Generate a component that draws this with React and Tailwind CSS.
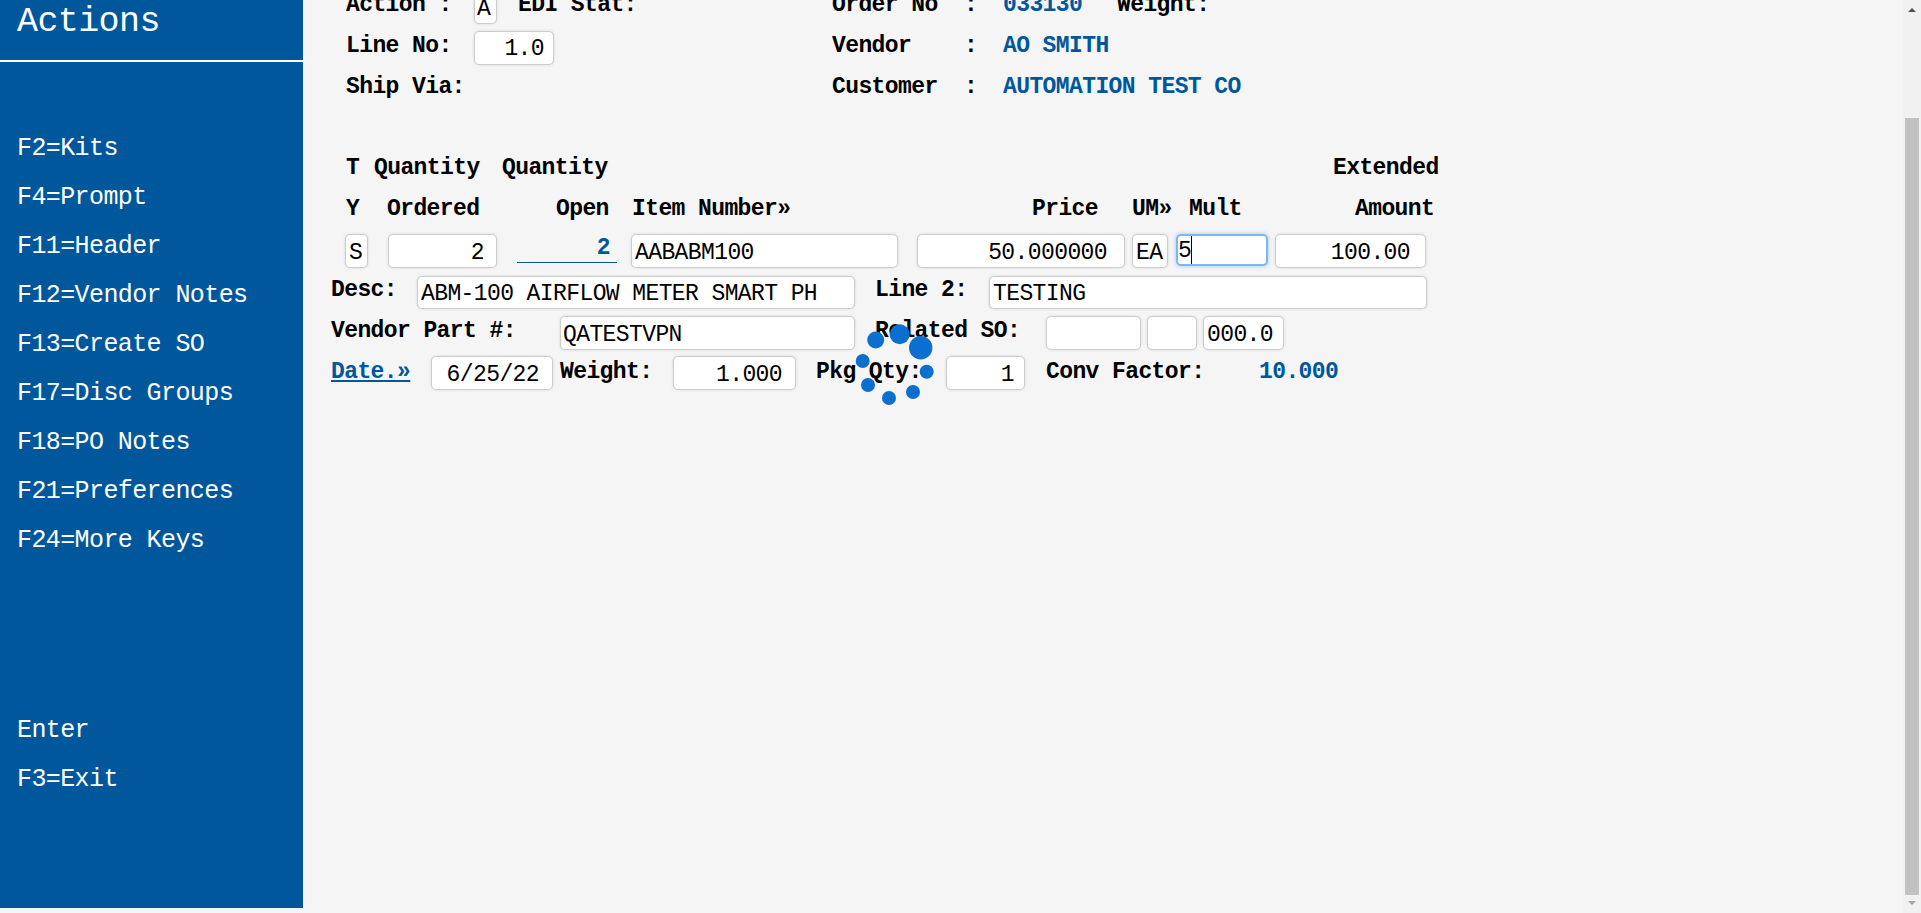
import React from "react";

const font = "font-['Liberation_Mono',monospace]";

const menuTop = [
  "F2=Kits",
  "F4=Prompt",
  "F11=Header",
  "F12=Vendor Notes",
  "F13=Create SO",
  "F17=Disc Groups",
  "F18=PO Notes",
  "F21=Preferences",
  "F24=More Keys",
];

// Bold field label
const Label = ({ className = "", children }) => (
  <div className={`font-bold text-black whitespace-pre leading-[33px] shrink-0 ${className}`}>
    {children}
  </div>
);

// Blue read-only value
const Value = ({ className = "", children }) => (
  <div className={`font-bold text-[#01579b] whitespace-pre leading-[33px] shrink-0 ${className}`}>
    {children}
  </div>
);

// Text box
const Field = ({ className = "", value = "" }) => (
  <input
    readOnly
    value={value}
    className={`h-[34px] pt-[4px] shrink-0 bg-white border border-[#cccccc] rounded-[5px] shadow-[0_0_3px_rgba(0,0,0,0.12)] text-black tracking-[-0.6px] outline-none ${font} text-[23px] ${className}`}
  />
);

const Sidebar = () => (
  <aside className="w-[303px] h-[908px] shrink-0 bg-[#01579b] text-white">
    <div className="h-[62px] border-b-2 border-white pl-[17px] text-[35px] tracking-[-0.6px] leading-[44px]">
      Actions
    </div>
    <div className="mt-[62px]">
      {menuTop.map((item) => (
        <div key={item} className="h-[49px] pl-[17px] text-[25px] leading-[49px] tracking-[-0.6px]">
          {item}
        </div>
      ))}
    </div>
    <div className="mt-[141px]">
      {["Enter", "F3=Exit"].map((item) => (
        <div key={item} className="h-[49px] pl-[17px] text-[25px] leading-[49px] tracking-[-0.6px]">
          {item}
        </div>
      ))}
    </div>
  </aside>
);

const Spinner = () => (
  <svg className="absolute left-[850px] top-[320px]" width="90" height="90" viewBox="850 320 90 90">
    <g fill="#0b6fd0">
      <circle cx="875.7" cy="340" r="8.5" />
      <circle cx="899.7" cy="334.3" r="10" />
      <circle cx="920.7" cy="347.7" r="11.7" />
      <circle cx="926.7" cy="371.7" r="7" />
      <circle cx="913" cy="392" r="7" />
      <circle cx="889" cy="398" r="7" />
      <circle cx="868" cy="385" r="7" />
      <circle cx="862.7" cy="361" r="7" />
    </g>
  </svg>
);

const Scrollbar = () => (
  <div className="w-[18px] h-[913px] shrink-0 bg-[#f1f1f1] flex flex-col items-center">
    <svg className="mt-[8px]" width="8" height="4" viewBox="0 0 8 4">
      <path d="M4 0 L8 4 L0 4 Z" fill="#505050" />
    </svg>
    <div className="mt-[106px] w-[14px] h-[777px] bg-[#c1c1c1]" />
    <svg className="mt-[6px]" width="8" height="4" viewBox="0 0 8 4">
      <path d="M0 0 L8 0 L4 4 Z" fill="#a3a3a3" />
    </svg>
  </div>
);

export default function App() {
  return (
    <div className={`relative flex h-[913px] w-full overflow-hidden bg-[#f5f5f5] ${font} text-[23px] tracking-[-0.6px]`}>
      <Sidebar />

      <main className="flex-1 min-w-0 -mt-[10px] pl-[28px]">
        {/* Header block, scrolled partly out of view */}
        <div className="flex h-[41px] pl-[15px]">
          <Label className="w-[128px] -mt-[1px]">Action :</Label>
          <Field className="w-[23px] pl-[2px]" value="A" />
          <Label className="ml-[21px] w-[314px] -mt-[1px]">EDI Stat:</Label>
          <Label className="w-[171px] -mt-[1px]">Order No  :</Label>
          <Value className="w-[114px] -mt-[1px]">033130</Value>
          <Label className="-mt-[1px]">Weight:</Label>
        </div>
        <div className="flex h-[41px] pl-[15px]">
          <Label className="w-[128px] -mt-[1px]">Line No:</Label>
          <Field className="w-[80px] text-right pr-[9px] !pt-[3px]" value="1.0" />
          <Label className="ml-[278px] w-[171px] -mt-[1px]">Vendor    :</Label>
          <Value className="-mt-[1px]">AO SMITH</Value>
        </div>
        <div className="flex h-[80px] pl-[15px]">
          <Label className="w-[486px] -mt-[1px]">Ship Via:</Label>
          <Label className="w-[171px] -mt-[1px]">Customer  :</Label>
          <Value className="-mt-[1px]">AUTOMATION TEST CO</Value>
        </div>

        {/* Column headings */}
        <div className="flex h-[41px] pl-[15px]">
          <Label className="w-[28px]">T</Label>
          <Label className="w-[128px]">Quantity</Label>
          <Label className="w-[831px]">Quantity</Label>
          <Label>Extended</Label>
        </div>
        <div className="flex h-[41px] pl-[15px]">
          <Label className="w-[41px]">Y</Label>
          <Label className="w-[169px]">Ordered</Label>
          <Label className="w-[76px]">Open</Label>
          <Label className="w-[400px]">Item Number»</Label>
          <Label className="w-[100px]">Price</Label>
          <Label className="w-[57px]">UM»</Label>
          <Label className="w-[166px]">Mult</Label>
          <Label>Amount</Label>
        </div>

        {/* Line item */}
        <div className="flex h-[42px] pl-[14px]">
          <Field className="w-[23px] pl-[3px]" value="S" />
          <Field className="ml-[20px] w-[109px] text-right pr-[12px]" value="2" />
          <div className="ml-[20px] w-[100px] h-[29px] shrink-0 border-b border-[#01579b] text-right pr-[7px] font-bold text-[#01579b] leading-[29px]">
            2
          </div>
          <Field className="ml-[14px] w-[267px] pl-[3px]" value="AABABM100" />
          <Field className="ml-[19px] w-[208px] text-right pr-[17px]" value="50.000000" />
          <Field className="ml-[7px] w-[36px] pl-[3px]" value="EA" />
          <div className="ml-[8px] w-[92px] h-[32px] shrink-0 flex items-center bg-white border-2 border-[#7ab8ef] rounded-[5px] shadow-[0_0_4px_rgba(66,153,225,0.5)] text-black">
            <span className="pt-[2px]">5</span>
            <span className="w-px h-[28px] bg-black" />
          </div>
          <Field className="ml-[7px] w-[151px] text-right pr-[15px]" value="100.00" />
        </div>

        {/* Description */}
        <div className="flex h-[40px]">
          <Label className="w-[86px] -mt-[2px]">Desc:</Label>
          <Field className="w-[438px] !h-[33px] pl-[3px]" value="ABM-100 AIRFLOW METER SMART PH" />
          <Label className="ml-[20px] w-[114px] -mt-[2px]">Line 2:</Label>
          <Field className="w-[438px] !h-[33px] pl-[3px]" value="TESTING" />
        </div>

        {/* Vendor part */}
        <div className="flex h-[40px]">
          <Label className="w-[229px] -mt-[1px]">Vendor Part #:</Label>
          <Field className="w-[295px] pl-[2px]" value="QATESTVPN" />
          <Label className="ml-[20px] w-[171px] -mt-[1px]">Related SO:</Label>
          <Field className="w-[95px]" />
          <Field className="ml-[6px] w-[50px]" />
          <Field className="ml-[6px] w-[81px] pl-[3px]" value="000.0" />
        </div>

        {/* Date row */}
        <div className="flex h-[40px]">
          <Label className="w-[100px]">
            <span className="text-[#01579b] underline">Date.»</span>
          </Label>
          <Field className="w-[122px] text-right pr-[13px]" value="6/25/22" />
          <Label className="ml-[7px] w-[113px]">Weight:</Label>
          <Field className="w-[123px] text-right pr-[13px]" value="1.000" />
          <Label className="ml-[20px] w-[130px]">Pkg Qty:</Label>
          <Field className="w-[79px] text-right pr-[10px]" value="1" />
          <Label className="ml-[21px] w-[213px]">Conv Factor:</Label>
          <Value>10.000</Value>
        </div>
      </main>

      <Scrollbar />
      <Spinner />
    </div>
  );
}
